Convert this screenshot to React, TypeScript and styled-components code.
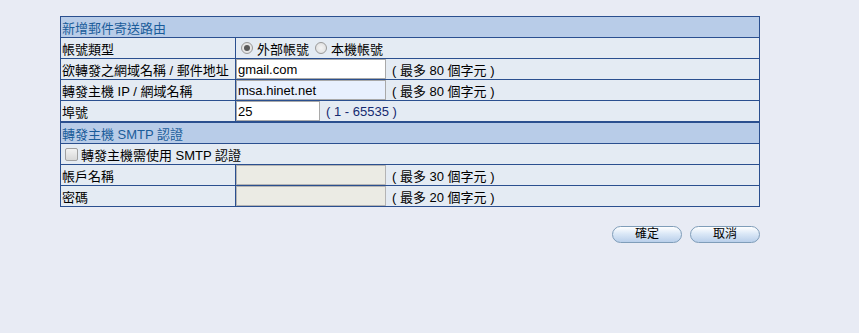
import styled, { createGlobalStyle } from "styled-components";

const GlobalStyle = createGlobalStyle`
  html, body {
    margin: 0;
    padding: 0;
    background: #e8ebf4;
  }
  body {
    font-family: "Liberation Sans", "Noto Sans CJK TC", sans-serif;
    font-size: 13px;
    color: #000;
  }
`;

const Page = styled.div`
  width: 859px;
  height: 333px;
  padding: 16px 0 0 60px;
  box-sizing: border-box;
`;

const Table = styled.table`
  width: 700px;
  border-collapse: collapse;
  border: 1px solid #2a4f8f;
  background: #e4ebf3;
`;

const Row = styled.tr`
  height: 21px;
`;

const HeadCell = styled.td<{ thick?: boolean }>`
  background: #b8cce8;
  color: #1a5c9a;
  padding: 0 0 0 1px;
  border-top: ${(p) => (p.thick ? "2px" : "1px")} solid #2a4f8f;
  border-bottom: 1px solid #2a4f8f;
  height: 20px;
`;

const Label = styled.td`
  width: 173px;
  padding: 0 0 0 1px;
  border: 1px solid #2a4f8f;
  white-space: nowrap;
  height: 20px;
`;

const Field = styled.td<{ pad?: boolean }>`
  padding: 0 0 0 ${(p) => (p.pad ? "4px" : "0")};
  border: 1px solid #2a4f8f;
  white-space: nowrap;
  height: 20px;
`;

const Inline = styled.div`
  display: flex;
  align-items: center;
  gap: 5px;
`;

const Input = styled.input<{ w: number; fill?: string }>`
  box-sizing: border-box;
  width: ${(p) => p.w}px;
  height: 20px;
  margin: 0;
  padding: 0 1px;
  font-family: "Liberation Sans", sans-serif;
  font-size: 13px;
  color: #000;
  background: ${(p) => p.fill ?? "#fff"};
  border: 1px solid #a9a9a9;
  outline: none;
  &:disabled {
    background: #ebebe4;
    border-color: #b4b4b4;
  }
`;

const Hint = styled.span<{ blue?: boolean }>`
  color: ${(p) => (p.blue ? "#142a70" : "#000")};
  margin-left: 1px;
`;

const RadioWrap = styled.label`
  display: inline-flex;
  align-items: center;
  margin-right: 5px;
`;

const Radio = styled.input`
  appearance: none;
  box-sizing: border-box;
  width: 12px;
  height: 12px;
  margin: 0 4px 0 1px;
  border: 1px solid #9a9a9a;
  border-radius: 50%;
  background: radial-gradient(circle, #f4f4f4 0%, #dcdcdc 100%);
  position: relative;
  &:checked::after {
    content: "";
    position: absolute;
    left: 2px;
    top: 2px;
    width: 6px;
    height: 6px;
    border-radius: 50%;
    background: #5a5a5a;
  }
`;

const Check = styled.input`
  appearance: none;
  box-sizing: border-box;
  width: 13px;
  height: 13px;
  margin: 0 3px 0 0;
  border: 1px solid #a0a0a0;
  border-radius: 2px;
  background: linear-gradient(#f2f2f2, #d8d8d8);
`;

const CheckLabel = styled.label`
  display: inline-flex;
  align-items: center;
  padding-left: 4px;
`;

const Actions = styled.div`
  width: 700px;
  display: flex;
  justify-content: flex-end;
  gap: 8px;
  margin-top: 19px;
`;

const Btn = styled.button`
  width: 70px;
  height: 17px;
  padding: 0;
  border: 1px solid #7f9db9;
  border-radius: 9px;
  background: linear-gradient(#ffffff 0%, #dbe8f7 45%, #b9cfea 100%);
  font-family: "Liberation Sans", "Noto Sans CJK TC", sans-serif;
  font-size: 12px;
  color: #000;
  line-height: 15px;
`;

export default function App() {
  return (
    <Page>
      <GlobalStyle />
      <Table>
        <tbody>
          <Row>
            <HeadCell colSpan={2}>新增郵件寄送路由</HeadCell>
          </Row>
          <Row>
            <Label>帳號類型</Label>
            <Field pad>
              <RadioWrap>
                <Radio type="radio" name="acct" defaultChecked />
                外部帳號
              </RadioWrap>
              <RadioWrap>
                <Radio type="radio" name="acct" />
                本機帳號
              </RadioWrap>
            </Field>
          </Row>
          <Row>
            <Label>欲轉發之網域名稱 / 郵件地址</Label>
            <Field>
              <Inline>
                <Input w={150} defaultValue="gmail.com" />
                <Hint>( 最多 80 個字元 )</Hint>
              </Inline>
            </Field>
          </Row>
          <Row>
            <Label>轉發主機 IP / 網域名稱</Label>
            <Field>
              <Inline>
                <Input w={150} fill="#e8f0fe" defaultValue="msa.hinet.net" />
                <Hint>( 最多 80 個字元 )</Hint>
              </Inline>
            </Field>
          </Row>
          <Row>
            <Label>埠號</Label>
            <Field>
              <Inline>
                <Input w={84} defaultValue="25" />
                <Hint blue>( 1 - 65535 )</Hint>
              </Inline>
            </Field>
          </Row>
          <Row>
            <HeadCell colSpan={2} thick>
              轉發主機 SMTP 認證
            </HeadCell>
          </Row>
          <Row>
            <Field colSpan={2}>
              <CheckLabel>
                <Check type="checkbox" />
                轉發主機需使用 SMTP 認證
              </CheckLabel>
            </Field>
          </Row>
          <Row>
            <Label>帳戶名稱</Label>
            <Field>
              <Inline>
                <Input w={150} disabled />
                <Hint>( 最多 30 個字元 )</Hint>
              </Inline>
            </Field>
          </Row>
          <Row>
            <Label>密碼</Label>
            <Field>
              <Inline>
                <Input w={150} type="password" disabled />
                <Hint>( 最多 20 個字元 )</Hint>
              </Inline>
            </Field>
          </Row>
        </tbody>
      </Table>
      <Actions>
        <Btn>確定</Btn>
        <Btn>取消</Btn>
      </Actions>
    </Page>
  );
}
